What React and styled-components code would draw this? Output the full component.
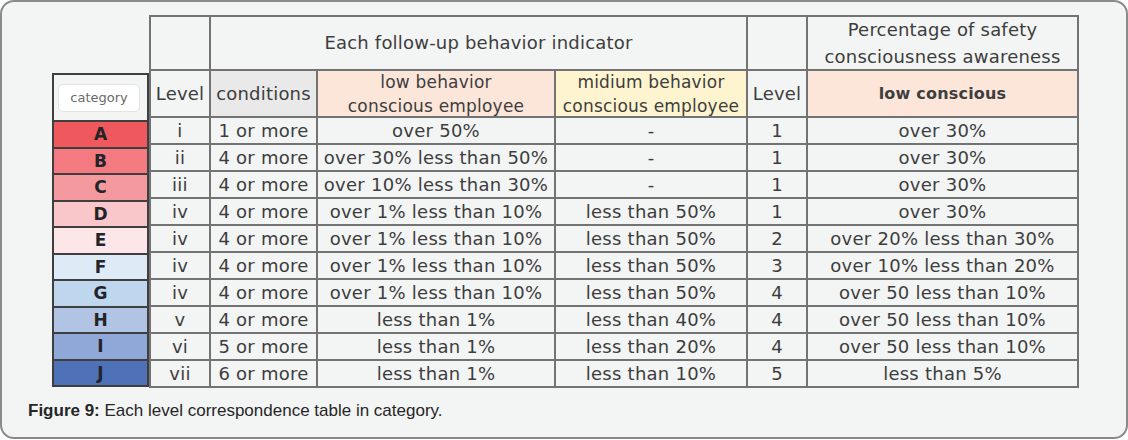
import React from 'react';
import styled, { createGlobalStyle } from 'styled-components';

const GlobalStyle = createGlobalStyle`
  html, body {
    margin: 0;
    padding: 0;
    background: #ffffff;
  }
  body {
    font-family: "DejaVu Sans", Verdana, sans-serif;
  }
`;

const lineColor = '#737373';
const textColor = '#3d3d3d';
const cardBackground = '#f3f4f4';

const categories = [
  { letter: 'A', bg: '#ef585d' },
  { letter: 'B', bg: '#f37a80' },
  { letter: 'C', bg: '#f4999d' },
  { letter: 'D', bg: '#f9c7c9' },
  { letter: 'E', bg: '#fde6e8' },
  { letter: 'F', bg: '#deebf7' },
  { letter: 'G', bg: '#bed7ee' },
  { letter: 'H', bg: '#b1c4e4' },
  { letter: 'I', bg: '#8fa8d8' },
  { letter: 'J', bg: '#4f71b8' },
];

const rows = [
  ['i', '1 or more', 'over 50%', '-', '1', 'over 30%'],
  ['ii', '4 or more', 'over 30% less than 50%', '-', '1', 'over 30%'],
  ['iii', '4 or more', 'over 10% less than 30%', '-', '1', 'over 30%'],
  ['iv', '4 or more', 'over 1% less than 10%', 'less than 50%', '1', 'over 30%'],
  ['iv', '4 or more', 'over 1% less than 10%', 'less than 50%', '2', 'over 20% less than 30%'],
  ['iv', '4 or more', 'over 1% less than 10%', 'less than 50%', '3', 'over 10% less than 20%'],
  ['iv', '4 or more', 'over 1% less than 10%', 'less than 50%', '4', 'over 50 less than 10%'],
  ['v', '4 or more', 'less than 1%', 'less than 40%', '4', 'over 50 less than 10%'],
  ['vi', '5 or more', 'less than 1%', 'less than 20%', '4', 'over 50 less than 10%'],
  ['vii', '6 or more', 'less than 1%', 'less than 10%', '5', 'less than 5%'],
];

const Card = styled.div`
  box-sizing: border-box;
  width: 1128px;
  height: 439px;
  border: 2px solid #8a8a8a;
  border-radius: 14px;
  background: ${cardBackground};
  padding: 13px 0 0 0;
  display: flex;
  flex-direction: column;
`;

const TableArea = styled.div`
  display: flex;
  align-items: flex-start;
  padding-left: 50px;
`;

const CategoryColumn = styled.div`
  box-sizing: border-box;
  width: 97px;
  height: 314px;
  margin-top: 58px;
  padding: 2px;
  background: #3f3f3f;
  display: grid;
  grid-template-rows: 45px repeat(10, 1fr);
  row-gap: 2px;
`;

const CategoryHead = styled.div`
  background: ${cardBackground};
  display: flex;
  align-items: center;
  padding-left: 4px;
`;

const CategoryPill = styled.div`
  box-sizing: border-box;
  width: 82px;
  height: 28px;
  background: #ffffff;
  border: 1px solid #e4e4e4;
  border-radius: 5px;
  display: flex;
  align-items: center;
  justify-content: center;
  font-size: 13px;
  color: #6a6a6a;
`;

const CategoryCell = styled.div`
  background: ${(p) => p.$bg};
  display: flex;
  align-items: center;
  justify-content: center;
  font-weight: bold;
  font-size: 17px;
  color: #232427;
`;

const MainGrid = styled.div`
  display: grid;
  grid-template-columns: 58px 105px 236px 190px 58px 269px;
  grid-template-rows: 52px 45px repeat(10, 25px);
  gap: 2px;
  padding: 2px;
  background: ${lineColor};
`;

const HeadCell = styled.div`
  grid-column: ${(p) => p.$span || 'auto'};
  background: ${(p) => p.$bg || cardBackground};
  display: flex;
  flex-direction: column;
  align-items: center;
  justify-content: center;
  text-align: center;
  color: ${textColor};
  font-size: ${(p) => p.$size || 18}px;
  font-weight: ${(p) => (p.$bold ? 'bold' : 'normal')};
  line-height: ${(p) => p.$lh || 26}px;
  letter-spacing: 0.2px;
  white-space: nowrap;
  overflow: hidden;
`;

const DataCell = styled.div`
  background: ${cardBackground};
  display: flex;
  align-items: center;
  justify-content: center;
  color: ${textColor};
  font-size: 18px;
  line-height: 25px;
  letter-spacing: 0.25px;
  white-space: nowrap;
`;

const Caption = styled.p`
  margin: 13px 0 0 26px;
  font-family: "Liberation Sans", Arial, sans-serif;
  font-size: 17px;
  line-height: 20px;
  color: #262626;

  strong {
    font-weight: bold;
  }
`;

export default function App() {
  return (
    <>
      <GlobalStyle />
      <Card>
        <TableArea>
          <CategoryColumn>
            <CategoryHead>
              <CategoryPill>category</CategoryPill>
            </CategoryHead>
            {categories.map((c) => (
              <CategoryCell key={c.letter} $bg={c.bg}>
                {c.letter}
              </CategoryCell>
            ))}
          </CategoryColumn>

          <MainGrid>
            <HeadCell />
            <HeadCell $span="2 / 5">Each follow-up behavior indicator</HeadCell>
            <HeadCell />
            <HeadCell $lh={27}>
              <span>Percentage of safety</span>
              <span>consciousness awareness</span>
            </HeadCell>

            <HeadCell>Level</HeadCell>
            <HeadCell $bg="#e9e9e9">conditions</HeadCell>
            <HeadCell $bg="#fce5d9" $size={17} $lh={24}>
              <span>low behavior</span>
              <span>conscious employee</span>
            </HeadCell>
            <HeadCell $bg="#fff4d0" $size={17} $lh={24}>
              <span>midium behavior</span>
              <span>conscious employee</span>
            </HeadCell>
            <HeadCell>Level</HeadCell>
            <HeadCell $bg="#fce5d9" $size={16} $bold>
              low conscious
            </HeadCell>

            {rows.map((row, i) =>
              row.map((value, j) => <DataCell key={`${i}-${j}`}>{value}</DataCell>)
            )}
          </MainGrid>
        </TableArea>

        <Caption>
          <strong>Figure 9:</strong> Each level correspondence table in category.
        </Caption>
      </Card>
    </>
  );
}
